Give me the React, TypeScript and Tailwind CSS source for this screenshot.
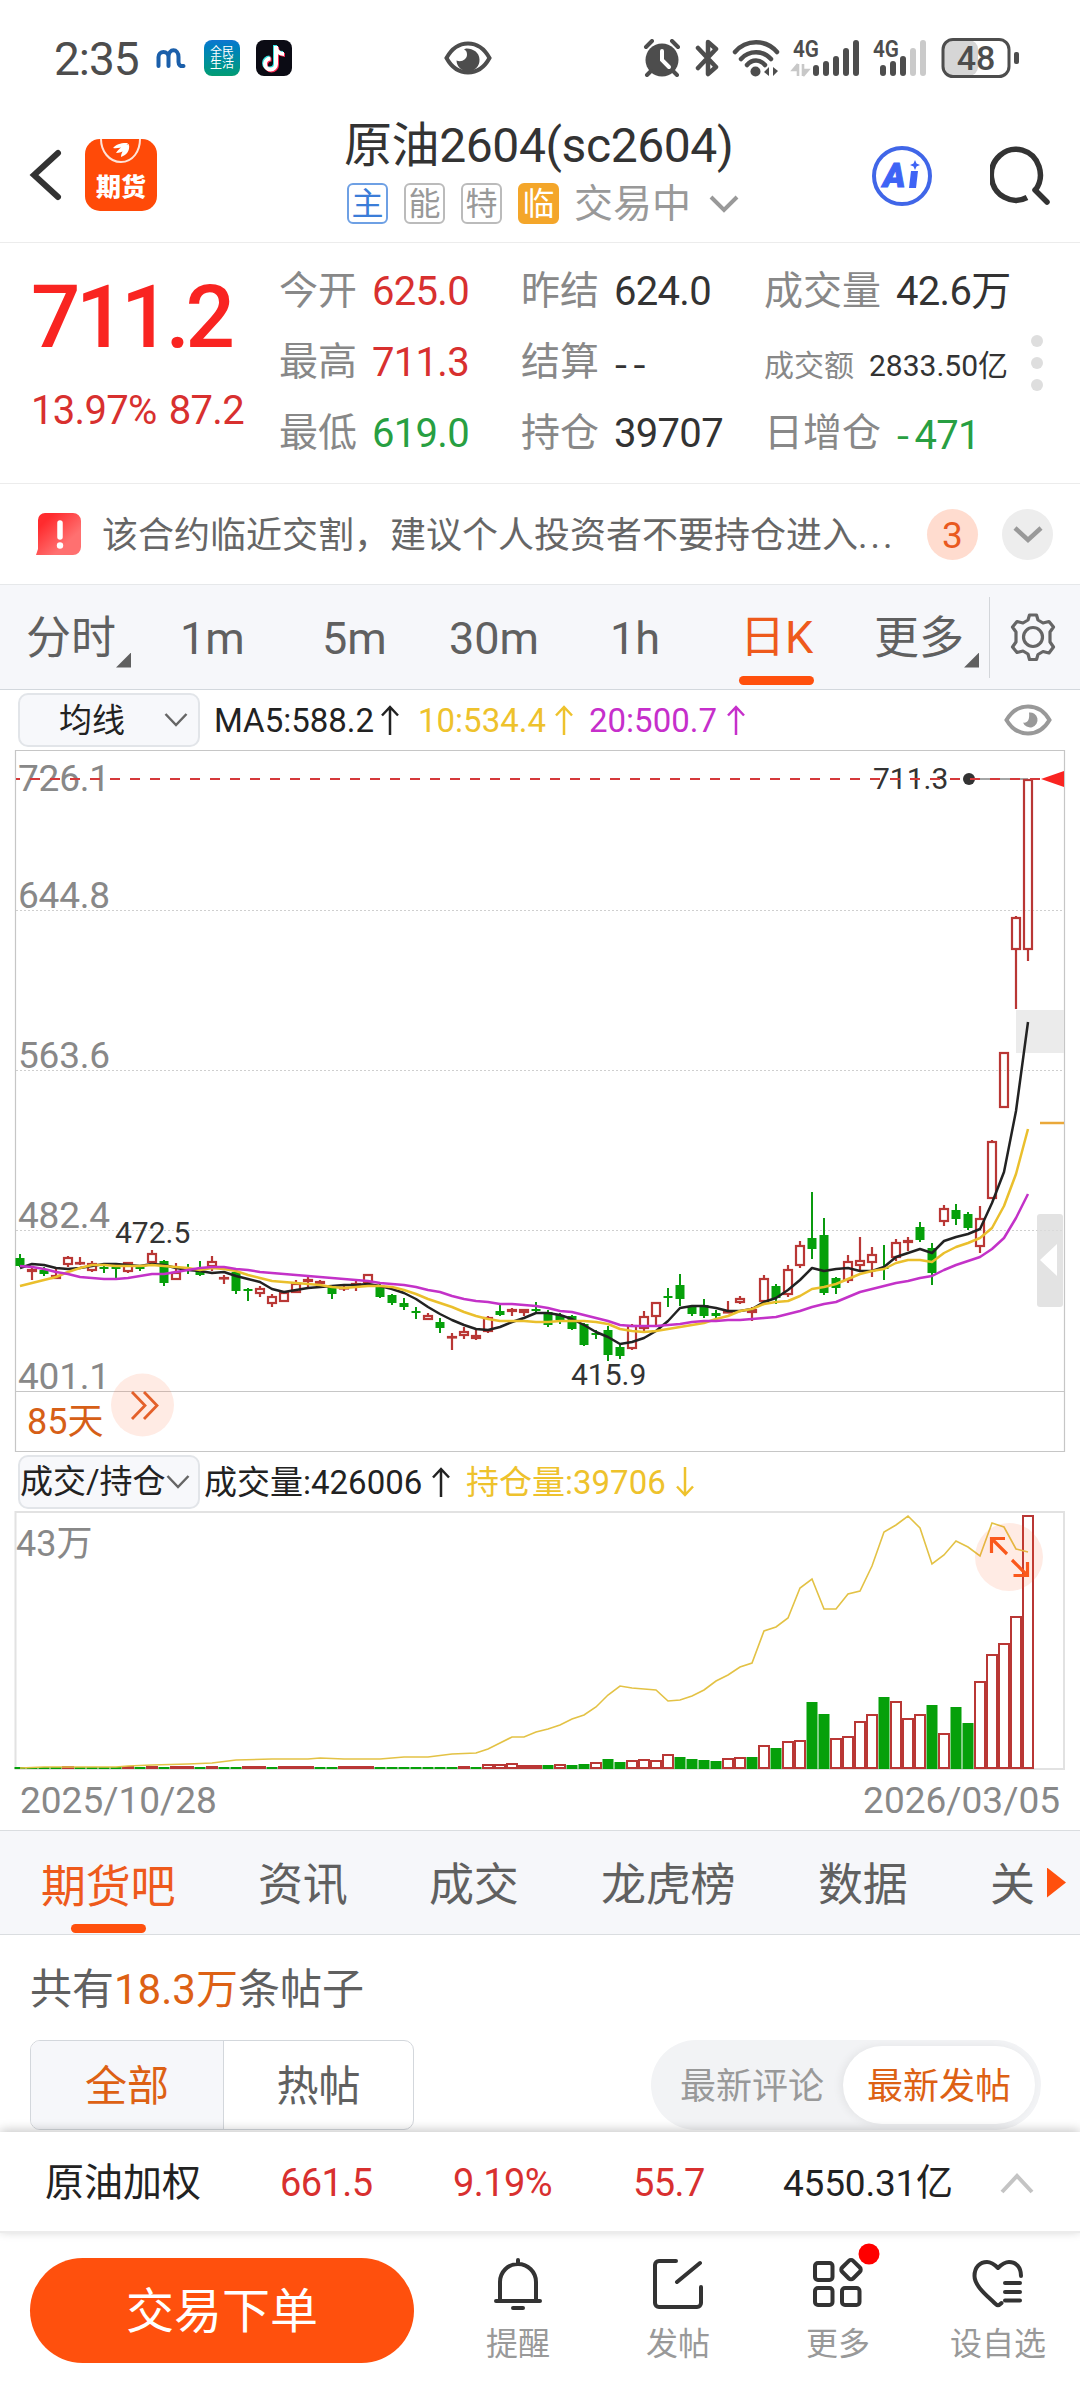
import React from 'react'

const FONT = 'font-[Roboto,"Noto_Sans_CJK_SC",sans-serif]'

// [color, high, body top, body bottom, low], y pixels from the top of the chart
type Candle = ['r' | 'g', number, number, number, number]

const CANDLES: Candle[] = [
  ['g', 504, 508, 516, 517], ['r', 517, 519, 522, 530], ['g', 517, 520, 524, 526], ['r', 518, 525, 529, 529],
  ['r', 506, 507, 515, 517], ['r', 507, 512, 514, 515], ['r', 511, 513, 521, 522], ['g', 515, 517, 518, 523],
  ['g', 513, 517, 518, 530], ['r', 512, 512, 522, 523], ['g', 515, 517, 518, 521], ['r', 500, 503, 513, 513],
  ['g', 510, 511, 533, 536], ['r', 513, 522, 530, 530], ['g', 514, 519, 520, 524], ['g', 511, 521, 525, 526],
  ['r', 506, 511, 517, 521], ['r', 525, 527, 529, 534], ['g', 521, 522, 541, 544], ['g', 538, 539, 540, 551],
  ['r', 536, 538, 544, 547], ['r', 544, 546, 554, 557], ['r', 541, 542, 552, 552], ['r', 530, 533, 543, 543],
  ['r', 527, 529, 532, 537], ['r', 530, 531, 534, 537], ['g', 535, 537, 544, 549], ['r', 535, 537, 539, 541],
  ['r', 531, 533, 536, 541], ['r', 524, 524, 533, 533], ['g', 533, 537, 547, 548], ['g', 544, 545, 553, 555],
  ['g', 548, 553, 557, 560], ['g', 557, 561, 562, 569], ['r', 563, 565, 570, 570], ['g', 568, 572, 578, 583],
  ['r', 583, 586, 587, 600], ['r', 577, 581, 586, 589], ['r', 580, 585, 589, 590], ['r', 566, 567, 582, 583],
  ['g', 555, 561, 565, 566], ['r', 558, 559, 562, 566], ['r', 559, 559, 563, 566], ['g', 552, 559, 560, 562],
  ['g', 560, 562, 575, 577], ['g', 563, 565, 570, 574], ['g', 565, 566, 579, 580], ['g', 573, 574, 595, 596],
  ['g', 580, 583, 584, 589], ['g', 576, 580, 605, 611], ['g', 595, 597, 606, 609], ['r', 574, 575, 599, 600],
  ['r', 561, 566, 579, 581], ['r', 552, 552, 567, 575], ['g', 538, 546, 547, 557], ['g', 524, 535, 549, 556],
  ['g', 556, 557, 564, 566], ['g', 549, 555, 566, 568], ['g', 560, 563, 566, 569], ['r', 551, 561, 563, 563],
  ['r', 546, 548, 553, 554], ['r', 557, 559, 563, 571], ['r', 525, 528, 552, 552], ['g', 534, 536, 548, 554],
  ['r', 515, 519, 545, 547], ['r', 491, 495, 516, 518], ['g', 442, 488, 499, 509], ['g', 468, 485, 543, 545],
  ['g', 527, 528, 538, 544], ['r', 505, 511, 531, 533], ['r', 487, 510, 516, 521], ['r', 497, 504, 513, 527],
  ['g', 495, 517, 518, 530], ['r', 489, 492, 508, 511], ['r', 487, 490, 493, 501], ['g', 472, 477, 490, 492],
  ['g', 493, 498, 523, 535], ['r', 455, 458, 472, 476], ['g', 454, 460, 469, 475], ['g', 462, 464, 478, 480],
  ['r', 456, 468, 497, 503], ['r', 390, 391, 449, 449], ['r', 302, 302, 358, 358], ['r', 166, 167, 200, 259],
  ['r', 29, 29, 200, 211],
]

const MA5 = [
  518, 514, 515, 518, 519, 518, 516, 514, 514, 515, 516, 514, 515, 518, 520, 521, 523, 522, 526, 529, 532, 539,
  542, 540, 538, 537, 536, 535, 535, 534, 536, 539, 543, 549, 557, 564, 570, 575, 579, 580, 577, 572, 568, 563,
  563, 565, 569, 575, 582, 587, 594, 592, 588, 581, 571, 558, 556, 556, 558, 561, 561, 559, 552, 548, 540, 530,
  518, 521, 519, 518, 521, 521, 517, 507, 503, 499, 503, 491, 487, 484, 479, 453, 422, 361, 272,
]

const MA10 = [
  536, 533, 530, 527, 522, 518, 515, 515, 516, 516, 516, 515, 516, 517, 518, 520, 518, 519, 521, 525, 528, 531,
  532, 533, 534, 535, 537, 538, 537, 536, 536, 537, 540, 544, 549, 553, 557, 562, 566, 569, 571, 571, 571, 572,
  572, 571, 571, 571, 572, 574, 579, 581, 582, 581, 579, 577, 575, 573, 569, 566, 561, 559, 554, 552, 551, 546,
  539, 537, 534, 529, 524, 521, 519, 513, 510, 510, 512, 503, 497, 493, 488, 478, 456, 424, 379,
]

const MA20 = [
  516, 517, 519, 522, 524, 527, 528, 529, 529, 528, 526, 524, 524, 522, 520, 518, 517, 517, 519, 520, 522, 523,
  524, 525, 526, 527, 528, 529, 530, 531, 533, 534, 535, 537, 540, 542, 546, 549, 551, 552, 554, 554, 555, 556,
  558, 561, 562, 565, 568, 571, 575, 576, 576, 576, 575, 574, 572, 571, 571, 570, 570, 569, 568, 567, 564, 561,
  557, 554, 552, 547, 542, 539, 536, 533, 531, 528, 526, 520, 515, 511, 507, 499, 488, 468, 444,
]

// volume bars: colour per day, and the y of each bar's top
const VOL_COLORS = 'ggggrggggrgrgrrgrggrrgrrrggrrrgggggggrgrrrrrgrggrggrrrrggggrrgrgrrggrrrrgrrrgrggrrrrr'
const VOL_TOPS = [
  257, 257, 257, 257, 256, 257, 257, 257, 257, 256, 257, 256, 257, 256, 256, 257, 256, 257, 257, 256, 256, 257,
  256, 256, 256, 257, 257, 256, 256, 256, 257, 257, 257, 257, 257, 257, 257, 256, 257, 254, 254, 253, 255, 255,
  255, 254, 255, 254, 252, 249, 252, 250, 249, 250, 244, 247, 249, 250, 251, 248, 247, 247, 235, 238, 231, 230,
  192, 204, 228, 226, 211, 204, 187, 191, 208, 204, 195, 223, 197, 213, 171, 144, 133, 106, 5,
]

// open interest, [day index, y]
const OPEN_INTEREST = [
  [0, 258], [2, 257], [8, 257], [9, 256], [11, 255], [14, 254], [16, 253], [18, 250], [21, 249], [24, 249],
  [25, 248], [27, 249], [30, 249], [32, 247], [34, 247], [36, 244], [38, 243], [39, 239], [40, 233], [41, 227],
  [42, 227], [43, 222], [44, 219], [45, 215], [46, 209], [47, 205], [48, 197], [49, 185], [50, 176], [51, 178],
  [52, 179], [53, 180], [54, 191], [55, 190], [56, 186], [57, 180], [58, 171], [59, 165], [60, 157], [61, 153],
  [62, 121], [63, 117], [64, 108], [65, 78], [66, 69], [67, 99], [68, 99], [69, 84], [70, 81], [71, 56], [72, 22],
  [73, 15], [74, 6], [75, 18], [76, 54], [77, 45], [78, 31], [79, 37], [80, 46], [81, 13], [82, 17], [83, 39],
  [84, 42],
]

const dayX = (i: number) => 20 + i * 12
const toPoints = (ys: number[]) => ys.map((y, i) => `${dayX(i)},${y}`).join(' ')

function Signal({ level, data }: { level: number; data?: boolean }) {
  const heights = [11, 15, 20, 28, 36]
  return (
    <svg className="overflow-visible" width="68" height="38" viewBox="0 0 68 38">
      <text x="0" y="18" fontSize="23" fontWeight="600" fill="#4d4d4d" textLength="26" lengthAdjust="spacingAndGlyphs">4G</text>
      {data && <path d="M5 25v12M5 25l-5 6h5M10 37V25M10 37l5-6h-5" stroke="#c8c8c8" strokeWidth="2.6" fill="#c8c8c8" />}
      {heights.map((h, i) => (
        <rect
          key={h}
          x={(data ? 20 : 7) + i * 10}
          y={37 - h}
          width="6"
          height={h}
          rx="3"
          fill={i < level ? '#4d4d4d' : '#cacaca'}
        />
      ))}
    </svg>
  )
}

function StatusBar() {
  return (
    <div className="flex h-[115px] items-center pl-[54px] text-[#4d4d4d]">
      <span className="w-[102px] pt-[2px] text-[46px] leading-none tracking-[-1px]">2:35</span>
      <svg width="30" height="22" viewBox="0 0 30 22" fill="none" stroke="#1b5faa" strokeWidth="4" strokeLinecap="round">
        <path d="M2.500 19V10a5 5 0 0 1 10 0v9M12.500 10c0-9 10-9 10 0v5c0 3 2 4.500 5 4" />
      </svg>
      <div className="ml-[18px] flex h-[36px] w-[36px] flex-col items-center justify-center rounded-[8px] bg-gradient-to-b from-[#0f76d0] to-[#069c72] text-[12px] leading-[12px] text-white">
        <span>全民</span>
        <span>生活</span>
      </div>
      <svg className="ml-[16px]" width="36" height="36" viewBox="0 0 36 36" fill="none" strokeWidth="4">
        <rect width="36" height="36" rx="8" fill="#0b0b14" />
        <path d="M19 5v18a5.500 5.500 0 1 1-5.500-5.500M19 5c0 5 3 8 8 8" stroke="#33e0e0" />
        <path d="M21 7v18a5.500 5.500 0 1 1-5.500-5.500M21 7c0 5 3 8 8 8" stroke="#fe2c55" />
        <path d="M20 6v18a5.500 5.500 0 1 1-5.500-5.500M20 6c0 5 3 8 8 8" stroke="#fff" />
      </svg>
      <svg className="ml-[152px]" width="48" height="34" viewBox="0 0 48 34">
        <path d="M2.500 17C8 7 15 2.500 24 2.500S40 7 45.500 17C40 27 33 31.500 24 31.500S8 27 2.500 17z" fill="none" stroke="#4d4d4d" strokeWidth="4" />
        <path d="M22 7.500C28 7 35.500 11 35.500 18.500a11.500 11.500 0 0 1-23 1c5 2 10.500-1 10.500-6 0-2.500-1-4.500-3-5z" fill="#4d4d4d" />
      </svg>
      <svg className="ml-[151px]" width="38" height="38" viewBox="0 0 38 38">
        <circle cx="19" cy="21" r="16.500" fill="#4d4d4d" />
        <path d="M3 8l6-6M35 8l-6-6M8 32l-4 4M30 32l4 4" stroke="#4d4d4d" strokeWidth="4" strokeLinecap="round" />
        <path d="M19 12v9l7 7" stroke="#fff" strokeWidth="4" fill="none" strokeLinecap="round" />
      </svg>
      <svg className="ml-[14px]" width="24" height="38" viewBox="0 0 24 38" fill="none" stroke="#4d4d4d" strokeWidth="4.500" strokeLinejoin="round" strokeLinecap="round">
        <path d="M3 9l18 19-8 7V3l8 7L3 29" />
      </svg>
      <svg className="ml-[13px]" width="50" height="38" viewBox="0 0 50 38" fill="none" stroke="#4d4d4d" strokeWidth="4.500" strokeLinecap="round">
        <path d="M3 13c11-13 31-13 42 0M9 20c8-9 22-9 30 0M15 26c5-6 13-6 18 0" />
        <circle cx="23.500" cy="32.500" r="5" fill="#4d4d4d" stroke="none" />
        <path d="M37 28v9l-5-4zM41 37v-9l5 4z" fill="#4d4d4d" stroke="none" />
      </svg>
      <div className="ml-[11px]"><Signal level={5} data /></div>
      <div className="ml-[12px]"><Signal level={3} /></div>
      <svg width="80" height="42" viewBox="0 0 80 42">
        <rect x="3" y="3" width="34" height="36" rx="9" fill="#d6d6d6" />
        <rect x="2" y="2.500" width="66" height="37" rx="10" fill="none" stroke="#4d4d4d" strokeWidth="3" />
        <rect x="73" y="15" width="5" height="12" rx="2" fill="#4d4d4d" />
        <text x="35" y="33" fontSize="34" fontWeight="500" fill="#4d4d4d" textAnchor="middle">48</text>
      </svg>
    </div>
  )
}

function Header() {
  const badge = 'flex h-[41px] w-[41px] items-center justify-center rounded-[6px] border-2 text-[32px] leading-none'
  return (
    <div className="flex h-[128px] items-start border-b border-[#ececec]">
      <svg className="ml-[29px] mt-[33px]" width="34" height="54" viewBox="0 0 34 54" fill="none" stroke="#333" strokeWidth="6" strokeLinecap="round">
        <path d="M29 5L5 27l24 22" />
      </svg>
      <svg className="ml-[22px] mt-[24px]" width="72" height="72" viewBox="0 0 72 72">
        <rect width="72" height="72" rx="15" fill="#ff4a08" />
        <path d="M16 0c0 12 8 23 20 23s19-11 19-23" fill="none" stroke="#ffe3d8" strokeWidth="2" />
        <path d="M28 9c5-5 9-5 15-5-2 3-8 6-15 5zM31 14c3-5 8-8 13-9-1 4-6 9-13 9zM36 18c0-5 4-9 8-12 1 5-2 10-8 12z" fill="#fff" />
        <text x="36" y="57" fontSize="25" fontWeight="800" fill="#fff" textAnchor="middle">期货</text>
      </svg>
      <div className="ml-[187px] w-[529px]">
        <div className="flex h-[62px] items-center whitespace-nowrap text-[48px] leading-none text-[#333]">
          <span className="tracking-[-0.4px]">原油2604(sc2604)</span>
        </div>
        <div className="mt-[6px] ml-[3px] flex items-center gap-4">
          <span className={`${badge} border-[#6ea0e4] text-[#3b7dd8]`}>主</span>
          <span className={`${badge} border-[#bbb] text-[#999]`}>能</span>
          <span className={`${badge} border-[#bbb] text-[#999]`}>特</span>
          <span className={`${badge} border-[#f4a62a] bg-[#f4a62a] text-white`}>临</span>
          <span className="ml-[-1px] pt-[2px] text-[39px] leading-none text-[#999]">交易中</span>
          <svg className="ml-[2px]" width="30" height="20" viewBox="0 0 30 20" fill="none" stroke="#999" strokeWidth="4">
            <path d="M2 3l13 13L28 3" />
          </svg>
        </div>
      </div>
      <svg className="ml-[-1px] mt-[31px]" width="60" height="60" viewBox="0 0 60 60">
        <circle cx="30" cy="30" r="28" fill="none" stroke="#4066e8" strokeWidth="4" />
        <text x="11" y="41" fontSize="34" fontWeight="900" fontStyle="italic" fill="#3e63f5" stroke="#3e63f5">A</text>
        <path d="M39 25h7l-2 17h-7z" fill="#3e63f5" />
        <path d="M43 14l1.500 3.500L48 19l-3.500 1.500L43 24l-1.500-3.500L38 19l3.500-1.500z" fill="#3e63f5" />
      </svg>
      <svg className="ml-[58px] mt-[31px]" width="60" height="60" viewBox="0 0 60 60" fill="none" stroke="#333" strokeWidth="5.500" strokeLinecap="round">
        <path d="M37 51.500A24.500 25.500 0 1 1 45.500 44" strokeLinecap="butt" />
        <path d="M45 44l12 12" />
      </svg>
    </div>
  )
}

function Stat({ label, value, tone = 'text-[#333]' }: { label: string; value: string; tone?: string }) {
  const digits = value.replace(/^-+/, '')
  const sign = value.slice(0, value.length - digits.length)
  return (
    <div className="flex h-[71px] items-center whitespace-nowrap text-[39px] leading-none">
      <span className="text-[#888]">{label}</span>
      <span className={`ml-[15px] text-[40px] tracking-[-0.7px] ${tone}`}>
        {sign && <span className='font-["Noto_Sans_CJK_SC"] tracking-[4.500px]'>{sign}</span>}
        {digits}
      </span>
    </div>
  )
}

function Quote() {
  return (
    <div className="flex h-[241px] border-b border-[#ececec]">
      <div className="ml-[31px] w-[248px] whitespace-nowrap text-[#d8302f]">
        <div className="mt-[30px] text-[87px] font-medium leading-[88px] tracking-[-4.500px] text-[#f92421]">711.2</div>
        <div className="mt-[28px] text-[40px] leading-[44px] tracking-[-0.7px]">
          13.97% <span className="ml-[3px]">87.2</span>
        </div>
      </div>
      <div className="mt-[13px] w-[242px]">
        <Stat label="今开" value="625.0" tone="text-[#d8302f]" />
        <Stat label="最高" value="711.3" tone="text-[#d8302f]" />
        <Stat label="最低" value="619.0" tone="text-[#289f42]" />
      </div>
      <div className="mt-[13px] w-[243px]">
        <Stat label="昨结" value="624.0" />
        <Stat label="结算" value="--" />
        <Stat label="持仓" value="39707" />
      </div>
      <div className="mt-[13px] w-[267px]">
        <Stat label="成交量" value="42.6万" />
        <div className="flex h-[71px] items-center whitespace-nowrap pt-[6px] text-[30px] leading-none">
          <span className="text-[#888]">成交额</span>
          <span className="ml-[15px] text-[#333]">2833.50亿</span>
        </div>
        <Stat label="日增仓" value="-471" tone="text-[#289f42]" />
      </div>
      <div className="mt-[92px] flex flex-col gap-[10px]">
        <i className="h-3 w-3 rounded-full bg-[#dedede]" />
        <i className="h-3 w-3 rounded-full bg-[#dedede]" />
        <i className="h-3 w-3 rounded-full bg-[#dedede]" />
      </div>
    </div>
  )
}

function Notice() {
  return (
    <div className="flex h-[101px] items-center border-b border-[#e6e8ea]">
      <svg className="ml-[36px]" width="46" height="44" viewBox="0 0 46 44">
        <defs>
          <linearGradient id="warn" x1="0" y1="0" x2="1" y2="1">
            <stop offset="0.200" stopColor="#ff2b2e" />
            <stop offset="0.700" stopColor="#ff7070" />
          </linearGradient>
        </defs>
        <path d="M9 1h28a8 8 0 0 1 8 8v26a8 8 0 0 1-8 8H0l2-6V8a7 7 0 0 1 7-7z" fill="url(#warn)" />
        <path d="M24 11v14" stroke="#fff" strokeWidth="5.500" strokeLinecap="round" />
        <circle cx="24" cy="33.500" r="3.200" fill="#fff" />
      </svg>
      <span className="ml-[20px] w-[825px] whitespace-nowrap pt-[3px] text-[36px] leading-none text-[#666]">
        该合约临近交割，建议个人投资者不要持仓进入<span className="tracking-[3px]">...</span>
      </span>
      <span className="flex h-[51px] w-[51px] items-center justify-center rounded-full bg-[#ffdccf] pt-[2px] text-[37px] leading-none text-[#e9591f]">3</span>
      <span className="ml-[24px] flex h-[51px] w-[51px] items-center justify-center rounded-full bg-[#ededed]">
        <svg width="30" height="20" viewBox="0 0 30 20" fill="none" stroke="#999" strokeWidth="4.500">
          <path d="M2 4l13 12L28 4" />
        </svg>
      </span>
    </div>
  )
}

function PeriodTabs() {
  return (
    <div className="flex h-[105px] items-center border-b border-[#d3d8dd] bg-[#f6f7fa] text-[45px] leading-none text-[#606060]">
      <span className="ml-[26px] pt-[3px]">分时</span>
      <i className="mt-[46px] h-[15px] w-[15px] bg-[#606060] [clip-path:polygon(100%_0,100%_100%,0_100%)]" />
      <span className="ml-[49px] w-[142px] pt-[3px]">1m</span>
      <span className="w-[127px] pt-[3px]">5m</span>
      <span className="w-[161px] pt-[3px]">30m</span>
      <span className="w-[129px] pt-[3px]">1h</span>
      <span className="flex h-full w-[75px] flex-col items-center justify-end text-[#ee5a1c]">
        <span className="mb-[16px]">日K</span>
        <i className="mb-[4px] h-[9px] w-[75px] rounded-full bg-[#ff500d]" />
      </span>
      <span className="ml-[60px] pt-[3px]">更多</span>
      <i className="mt-[46px] h-[15px] w-[15px] bg-[#606060] [clip-path:polygon(100%_0,100%_100%,0_100%)]" />
      <i className="ml-[10px] h-[81px] w-px bg-[#d3d6da]" />
      <svg className="ml-[18px]" width="50" height="50" viewBox="0 0 50 50" fill="none" stroke="#666" strokeWidth="3.200" strokeLinejoin="round">
        <path d="M20 8l1.500-5h7L30 8l5 3 6-1.500 4.500 5.500-3.500 5v10l3.500 5-4.500 6-6-1.500-5 3-1.500 5h-7L20 42l-5-3-6 1.500L4.500 35 8 30V20l-3.500-5L9 9.500l6 1.500z" />
        <circle cx="25" cy="25" r="9.500" />
      </svg>
    </div>
  )
}

function Arrow({ color, down = false }: { color: string; down?: boolean }) {
  return (
    <svg className={down ? 'rotate-180' : ''} width="18" height="30" viewBox="0 0 18 30" fill="none" stroke={color} strokeWidth="2.500">
      <path d="M9 30V2M1 10.500L9 2l8 8.500" />
    </svg>
  )
}

function SmallChevron() {
  return (
    <svg width="24" height="16" viewBox="0 0 24 16" fill="none" stroke="#666" strokeWidth="2.500">
      <path d="M1.500 2L12 13 22.500 2" />
    </svg>
  )
}

function MaRow() {
  return (
    <div className="flex h-[60px] items-center text-[33px] leading-none">
      <div className="ml-[18px] flex h-[54px] w-[182px] items-center rounded-[10px] border-2 border-[#e2e5e9] bg-[#f7f8fb] pl-[39px] text-[#222]">
        均线
        <span className="ml-[39px]"><SmallChevron /></span>
      </div>
      <span className="ml-[14px] w-[167px] text-[#222]">MA5:588.2</span>
      <Arrow color="#222" />
      <span className="ml-[19px] w-[137px] text-[#eec22c]">10:534.4</span>
      <Arrow color="#eec22c" />
      <span className="ml-[16px] w-[138px] text-[#c62fcb]">20:500.7</span>
      <Arrow color="#c62fcb" />
      <svg className="ml-[259px]" width="48" height="32" viewBox="0 0 48 32">
        <path d="M2.500 16C8 6.500 15 2.500 24 2.500S40 6.500 45.500 16C40 25.500 33 29.500 24 29.500S8 25.500 2.500 16z" fill="none" stroke="#999" strokeWidth="4" />
        <path d="M25 8.500a7.500 7.500 0 1 1-6 10c4 1 7-2 6-10z" fill="#999" />
      </svg>
    </div>
  )
}

function CandleChart() {
  return (
    <svg className="block" width="1080" height="702" viewBox="0 0 1080 702" fill="none">
      <g stroke="#cfcfcf" strokeWidth="1" strokeDasharray="2 2">
        <path d="M16 160.500H1064M16 320.500H1064M16 480.500H1064" />
      </g>
      <path d="M15.500 .5H1064.500V701.500H15.500zM15.500 641.500H1064.500" stroke="#c6c6c6" strokeWidth="1.200" />
      <rect x="1016" y="260" width="48" height="43" fill="#ebebeb" />
      <path d="M1040 373H1064" stroke="#eaa83a" strokeWidth="2.500" />
      <g fill="#888" fontSize="37" letterSpacing="-0.2">
        <text x="18" y="41">726.1</text>
        <text x="18" y="158">644.8</text>
        <text x="18" y="318">563.6</text>
        <text x="18" y="478">482.4</text>
        <text x="18" y="639">401.1</text>
      </g>
      <path d="M969 29H1028" stroke="#888" strokeWidth="1.500" />

      {CANDLES.map(([c, high, top, bottom, low], i) => {
        const x = dayX(i)
        const h = Math.max(bottom - top, 2)
        return c === 'g' ? (
          <g key={i}>
            <path d={`M${x} ${high}V${low}`} stroke="#0a9a0f" strokeWidth="2" />
            <rect x={x - 4.5} y={top} width="9" height={h} fill="#06a00a" />
          </g>
        ) : (
          <g key={i} stroke="#b93735" strokeWidth="2.200">
            <path d={`M${x} ${high}V${top}M${x} ${bottom}V${low}`} />
            <rect x={x - 4} y={top + 1} width="8" height={Math.max(h - 2, 0.5)} />
          </g>
        )
      })}

      <g strokeWidth="2.500" strokeLinejoin="round">
        <polyline points={toPoints(MA5)} stroke="#222" />
        <polyline points={toPoints(MA10)} stroke="#eabf2c" />
        <polyline points={toPoints(MA20)} stroke="#c332c8" />
      </g>

      <g fill="#333" fontSize="30">
        <text x="115" y="493">472.5</text>
        <text x="571" y="635">415.9</text>
        <text x="873" y="39">711.3</text>
      </g>
      <circle cx="969" cy="29" r="6" fill="#333" />
      <path d="M16 29H1041" stroke="#d5393a" strokeWidth="2" strokeDasharray="10 10" strokeDashoffset="6" />
      <path d="M1041 29L1064 21V37z" fill="#f92421" />

      <rect x="1037" y="464" width="26" height="93" rx="3" fill="#dcdcdc" fillOpacity="0.800" />
      <path d="M1040 510L1057 494V526z" fill="#fff" />

      <text x="27" y="684" fontSize="36" fill="#d65f17">85天</text>
      <circle cx="142.500" cy="655" r="31.500" fill="#ff5a20" fillOpacity="0.120" />
      <path d="M132 642l13 13.500L132 669M144 642l13 13.500L144 669" stroke="#e4602a" strokeWidth="2.800" />
    </svg>
  )
}

function VolumeRow() {
  return (
    <div className="flex h-[59px] items-center whitespace-nowrap text-[33px] leading-none">
      <div className="ml-[18px] flex h-[54px] w-[182px] items-center rounded-[10px] border-2 border-[#e2e5e9] bg-[#f7f8fb] text-[#222]">
        成交/持仓
        <SmallChevron />
      </div>
      <span className="ml-[4px] w-[228px] pt-px text-[#222]">成交量:426006</span>
      <Arrow color="#222" />
      <span className="ml-[16px] w-[210px] pt-px text-[#eec22c]">持仓量:39706</span>
      <Arrow color="#eec22c" down />
    </div>
  )
}

function VolumeChart() {
  return (
    <svg className="block" width="1080" height="260" viewBox="0 1 1080 260" fill="none">
      <path d="M15.500 2H1064V259H15.500z" stroke="#e2e2e2" strokeWidth="2" />
      <text x="16" y="46" fontSize="36" fill="#888">43万</text>
      {VOL_TOPS.map((top, i) => {
        const x = dayX(i)
        return VOL_COLORS[i] === 'g' ? (
          <rect key={i} x={x - 5.5} y={top} width="11" height={259 - top} fill="#06a00a" />
        ) : (
          <rect key={i} x={x - 5} y={top + 1} width="10" height={Math.max(257 - top, 0.5)} stroke="#b93735" strokeWidth="2" />
        )
      })}
      <polyline points={OPEN_INTEREST.map(([i, y]) => `${dayX(i)},${y}`).join(' ')} stroke="#e3c245" strokeWidth="1.600" />
      <circle cx="1009" cy="47" r="34" fill="#ff5a20" fillOpacity="0.120" />
      <path d="M1007 44L992 29M991.500 43V28.500H1005M1012 50L1027 65M1013.500 65.500H1027.500V52" stroke="#fa581c" strokeWidth="3.200" />
    </svg>
  )
}

function ForumTabs() {
  return (
    <div className="flex h-[105px] items-center whitespace-nowrap border-y border-[#dadde0] bg-[#f6f7fa] text-[45px] leading-none tracking-[-0.200px] text-[#606060]">
      <span className="ml-[41px] flex h-full w-[217px] flex-col justify-end text-[#ee5a1c]">
        <span className="mb-[14px]">期货吧</span>
        <i className="mb-px ml-[30px] h-[9px] w-[75px] rounded-full bg-[#ff500d]" />
      </span>
      <span className="w-[171px] pt-[5px]">资讯</span>
      <span className="w-[172px] pt-[5px]">成交</span>
      <span className="w-[217px] pt-[5px]">龙虎榜</span>
      <span className="w-[172px] pt-[5px]">数据</span>
      <span className="w-[57px] pt-[5px]">关</span>
      <i className="h-[30px] w-[19px] bg-[#ff500d] [clip-path:polygon(0_0,100%_50%,0_100%)]" />
    </div>
  )
}

function Posts() {
  return (
    <div className="h-[197px] overflow-hidden px-[30px] leading-none">
      <div className="flex h-[105px] items-center pt-[4px] text-[42px] text-[#606060]">
        共有<span className="text-[#dd6114]">18.3万</span>条帖子
      </div>
      <div className="flex">
        <div className="flex h-[90px] w-[384px] overflow-hidden rounded-[10px] border border-[#d3d7dc] text-[42px]">
          <span className="flex w-[193px] items-center justify-center border-r border-[#d3d7dc] bg-[#f6f7fa] pt-[3px] text-[#dd6114]">全部</span>
          <span className="flex flex-1 items-center justify-center pt-[3px] text-[#606060]">热帖</span>
        </div>
        <div className="ml-[237px] flex h-[90px] w-[390px] items-center rounded-full bg-[#f2f3f5] text-[36px]">
          <span className="ml-[29px] w-[163px] whitespace-nowrap pt-[4px] text-[#999]">最新评论</span>
          <span className="flex h-[78px] w-[192px] items-center justify-center rounded-full bg-white pt-[4px] text-[#dd6114] shadow-[-3px_0_8px_rgba(0,0,0,0.06)]">
            最新发帖
          </span>
        </div>
      </div>
    </div>
  )
}

function IndexRow() {
  return (
    <div className="relative flex h-[101px] items-center whitespace-nowrap border-b-2 border-[#ececec] bg-white pt-[3px] text-[38px] leading-none tracking-[-0.600px] text-[#d8302f] shadow-[0_-2px_10px_rgba(0,0,0,0.22)]">
      <span className="ml-[45px] w-[235px] text-[39px] tracking-normal text-[#222]">原油加权</span>
      <span className="w-[173px]">661.5</span>
      <span className="w-[180px]">9.19%</span>
      <span className="w-[150px]">55.7</span>
      <span className="w-[217px] text-[37px] tracking-[-0.200px] text-[#222]">4550.31亿</span>
      <svg width="34" height="22" viewBox="0 0 34 22" fill="none" stroke="#c4c4c4" strokeWidth="4">
        <path d="M2 20L17 4l15 16" />
      </svg>
    </div>
  )
}

function NavItem({ label, children }: { label: string; children: React.ReactNode }) {
  return (
    <div className="flex w-[160px] flex-col items-center text-[32px] leading-none text-[#999]">
      <svg className="overflow-visible" width="52" height="52" viewBox="0 0 52 52" fill="none" stroke="#333" strokeWidth="4" strokeLinecap="round" strokeLinejoin="round">
        {children}
      </svg>
      <span className="mt-[18px]">{label}</span>
    </div>
  )
}

function BottomBar() {
  return (
    <div className="flex h-[155px] items-start bg-white">
      <button className="ml-[30px] mt-[25px] flex h-[105px] w-[384px] items-center justify-center rounded-full bg-[#ff500d] pt-[3px] text-[48px] leading-none text-white">
        交易下单
      </button>
      <div className="ml-[24px] mt-[25px] flex">
        <NavItem label="提醒">
          <path d="M26 2v3M8 42V24a18 18 0 0 1 36 0v18M4 43h44M21 50h10" />
        </NavItem>
        <NavItem label="发帖">
          <path d="M24 3H7a4 4 0 0 0-4 4v38a4 4 0 0 0 4 4h38a4 4 0 0 0 4-4V29M48 5L25 24" />
        </NavItem>
        <NavItem label="更多">
          <rect x="3" y="5" width="17.500" height="17" rx="3" />
          <rect x="3" y="30" width="17.500" height="17" rx="3" />
          <rect x="30" y="30" width="17.500" height="17" rx="3" />
          <rect x="31" y="4" width="15.500" height="15.500" rx="3" transform="rotate(45 39 12)" />
          <circle cx="57" cy="-4" r="10.500" fill="#f00" stroke="none" />
        </NavItem>
        <NavItem label="设自选">
          <path d="M49 18C49 9 44 4 37 4c-5 0-8 3-11 6-3-3-6-6-11-6C8 4 2.500 9 2.500 18c0 10 13 20 20 27 3 3 4 3 7 0M33 25h15M33 34h15M33 42.500h15" />
        </NavItem>
      </div>
    </div>
  )
}

export default function App() {
  return (
    <div className={`w-[1080px] overflow-hidden bg-white ${FONT}`}>
      <StatusBar />
      <Header />
      <Quote />
      <Notice />
      <PeriodTabs />
      <MaRow />
      <CandleChart />
      <VolumeRow />
      <VolumeChart />
      <div className="flex h-[59px] items-center justify-between pl-[20px] pr-[20px] text-[37px] leading-none text-[#888]">
        <span>2025/10/28</span>
        <span>2026/03/05</span>
      </div>
      <ForumTabs />
      <Posts />
      <IndexRow />
      <BottomBar />
    </div>
  )
}
